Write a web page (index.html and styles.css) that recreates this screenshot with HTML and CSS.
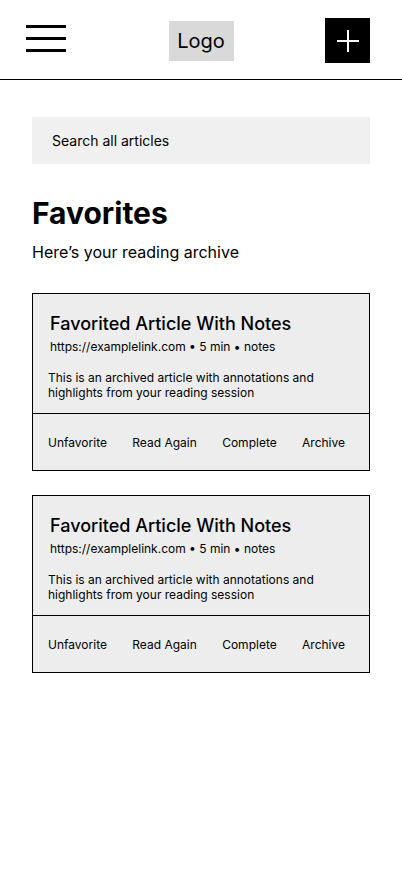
FILE: index.html
```html
<!DOCTYPE html>
<html lang="en">
<head>
<meta charset="utf-8">
<meta name="viewport" content="width=device-width, initial-scale=1">
<title>Favorites</title>
<link rel="stylesheet" href="styles.css">
</head>
<body>
<header class="topbar">
  <button class="menu" type="button" aria-label="Menu">
    <svg width="40" height="27" viewBox="0 0 40 27" aria-hidden="true"><path d="M0 1.5h40M0 13.5h40M0 25.5h40" stroke="#000" stroke-width="3"/></svg>
  </button>
  <a class="logo" href="#">Logo</a>
  <button class="add" type="button" aria-label="Add article">
    <svg width="22" height="22" viewBox="0 0 22 22" aria-hidden="true"><path d="M11 0v22M0 11h22" stroke="#fff" stroke-width="2"/></svg>
  </button>
</header>
<main class="page">
  <input class="search" type="search" placeholder="Search all articles" aria-label="Search all articles">
  <h1 class="title">Favorites</h1>
  <p class="subtitle">Here’s your reading archive</p>
  <article class="card">
    <div class="card-body">
      <h2 class="card-title">Favorited Article With Notes</h2>
      <p class="card-meta">https://examplelink.com • 5 min • notes</p>
      <p class="card-text">This is an archived article with annotations and highlights from your reading session</p>
    </div>
    <div class="card-actions">
      <button type="button">Unfavorite</button>
      <button type="button">Read Again</button>
      <button type="button">Complete</button>
      <button type="button">Archive</button>
    </div>
  </article>
  <article class="card">
    <div class="card-body">
      <h2 class="card-title">Favorited Article With Notes</h2>
      <p class="card-meta">https://examplelink.com • 5 min • notes</p>
      <p class="card-text">This is an archived article with annotations and highlights from your reading session</p>
    </div>
    <div class="card-actions">
      <button type="button">Unfavorite</button>
      <button type="button">Read Again</button>
      <button type="button">Complete</button>
      <button type="button">Archive</button>
    </div>
  </article>
</main>
</body>
</html>
```
FILE: styles.css
```css
* { box-sizing: border-box; margin: 0; }
body { background: #fff; color: #000; font-family: Inter, sans-serif; }
button { border: 0; padding: 0; background: none; color: inherit; font: inherit; cursor: pointer; }
svg { display: block; }

.topbar {
  display: grid;
  grid-template-columns: 1fr auto 1fr;
  align-items: start;
  height: 80px;
  padding: 18px 26px 0;
  border-bottom: 1px solid #000;
}
.menu { justify-self: start; margin-top: 7px; }
.logo {
  width: 65px;
  margin-top: 3px;
  background: #d9d9d9;
  color: inherit;
  font-size: 20px;
  line-height: 40px;
  text-align: center;
  text-decoration: none;
}
.add {
  display: grid;
  place-items: center;
  justify-self: end;
  width: 45px;
  height: 45px;
  margin-right: 6px;
  background: #000;
}

.page { padding: 37px 32px 32px; }
.search {
  display: block;
  width: 100%;
  height: 47px;
  padding: 0 20px;
  border: 0;
  border-radius: 0;
  background: #f0f0f0;
  color: inherit;
  font: inherit;
  font-size: 14px;
  appearance: none;
}
.search::placeholder { color: #000; opacity: 1; }
.title { margin-top: 31px; font-size: 30px; font-weight: 700; line-height: 36px; }
.subtitle { margin: 11px 0 31px; font-size: 16px; line-height: 20px; }

.card { margin-bottom: 24px; border: 1px solid #000; background: #ededed; }
.card-body { padding: 19px 15px 13px; }
.card-title { padding-left: 2px; font-size: 18px; font-weight: 500; line-height: 22px; }
.card-meta { margin-top: 4px; padding-left: 2px; font-size: 12px; line-height: 15px; }
.card-text { margin-top: 16px; font-size: 12px; line-height: 15px; }
.card-actions {
  display: flex;
  justify-content: space-between;
  align-items: center;
  height: 57px;
  padding: 0 24px 0 15px;
  border-top: 1px solid #000;
  font-size: 12px;
}
```
